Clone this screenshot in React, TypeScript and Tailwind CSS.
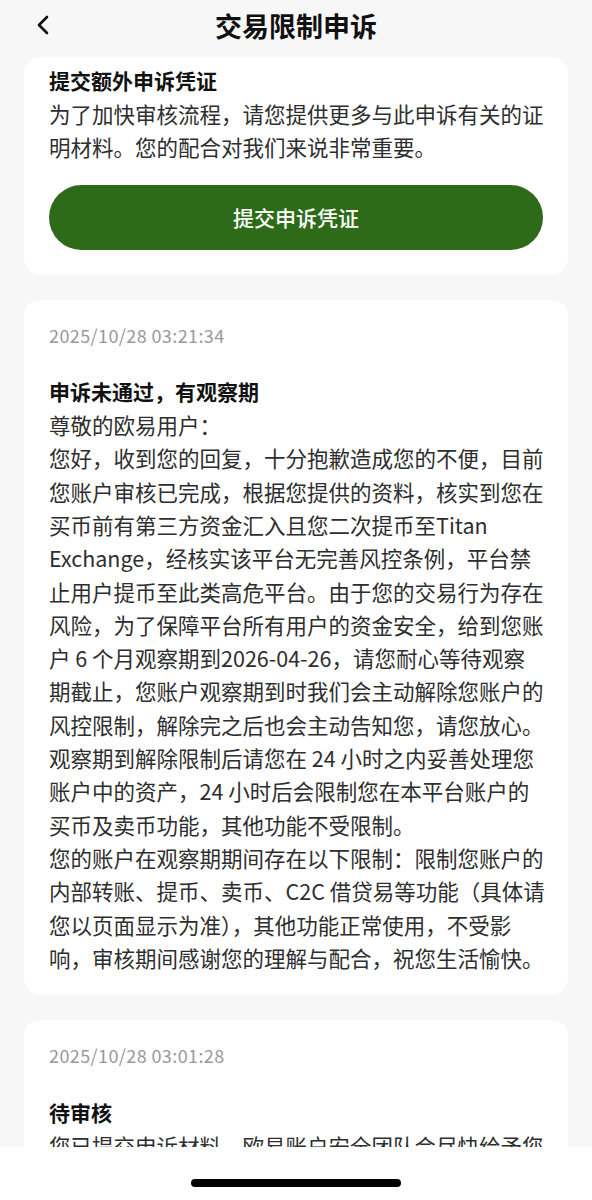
const cn = "font-['Noto_Sans_CJK_SC',sans-serif]";

const replyLines = [
  '尊敬的欧易用户：',
  '您好，收到您的回复，十分抱歉造成您的不便，目前',
  '您账户审核已完成，根据您提供的资料，核实到您在',
  '买币前有第三方资金汇入且您二次提币至Titan',
  'Exchange，经核实该平台无完善风控条例，平台禁',
  '止用户提币至此类高危平台。由于您的交易行为存在',
  '风险，为了保障平台所有用户的资金安全，给到您账',
  '户 6 个月观察期到2026-04-26，请您耐心等待观察',
  '期截止，您账户观察期到时我们会主动解除您账户的',
  '风控限制，解除完之后也会主动告知您，请您放心。',
  '观察期到解除限制后请您在 24 小时之内妥善处理您',
  '账户中的资产，24 小时后会限制您在本平台账户的',
  '买币及卖币功能，其他功能不受限制。',
  '您的账户在观察期期间存在以下限制：限制您账户的',
  '内部转账、提币、卖币、C2C 借贷易等功能（具体请',
  '您以页面显示为准），其他功能正常使用，不受影',
  '响，审核期间感谢您的理解与配合，祝您生活愉快。',
];

function Lines({ lines }: { lines: string[] }) {
  return (
    <div className="text-[21.5px] leading-[33.3px] text-[#2e2e2e]">
      {lines.map((l, i) => (
        <div key={i} className="whitespace-nowrap">
          {l}
        </div>
      ))}
    </div>
  );
}

function RecordCard({ time, title, lines }: { time: string; title: string; lines: string[] }) {
  return (
    <div className="bg-white rounded-[16px] px-[25px] pt-[23px] pb-[21px]">
      <div className="text-[18px] tracking-[0.4px] leading-[24px] text-[#999999]">{time}</div>
      <div className="mt-[28.5px] text-[21px] leading-[33px] font-bold text-[#111111]">{title}</div>
      <Lines lines={lines} />
    </div>
  );
}

export default function App() {
  return (
    <div className={`${cn} w-full h-[1200px] bg-[#f7f7f7] flex flex-col overflow-hidden`}>
      {/* header */}
      <div className="h-[50px] shrink-0 grid grid-cols-[64px_1fr_64px] items-center">
        <div className="flex items-center pl-[36px]">
          <svg width="13" height="20" viewBox="0 0 13 20" fill="none">
            <path d="M11 2 L3 10 L11 18" stroke="#111" strokeWidth="2.6" strokeLinecap="round" strokeLinejoin="round" />
          </svg>
        </div>
        <div className="text-center text-[27px] font-bold text-[#111111] leading-none">交易限制申诉</div>
        <div />
      </div>

      {/* content */}
      <div className="flex-1 overflow-hidden px-[24px] pt-[7px] flex flex-col gap-[25px]">
        <div className="bg-white rounded-[16px] px-[25px] pt-[6.5px] pb-[24.5px]">
          <div className="text-[21px] leading-[33px] font-bold text-[#111111]">提交额外申诉凭证</div>
          <Lines
            lines={[
              '为了加快审核流程，请您提供更多与此申诉有关的证',
              '明材料。您的配合对我们来说非常重要。',
            ]}
          />
          <button className="mt-[22px] w-full h-[65px] rounded-full bg-[#2d6b19] text-white text-[21px] font-medium flex items-center justify-center">
            提交申诉凭证
          </button>
        </div>

        <RecordCard time="2025/10/28 03:21:34" title="申诉未通过，有观察期" lines={replyLines} />

        <RecordCard
          time="2025/10/28 03:01:28"
          title="待审核"
          lines={['您已提交申诉材料，欧易账户安全团队会尽快给予您']}
        />
      </div>

      {/* home indicator */}
      <div className="h-[53px] shrink-0 bg-white flex justify-center pt-[32px]">
        <div className="w-[210px] h-[8px] rounded-full bg-black" />
      </div>
    </div>
  );
}
